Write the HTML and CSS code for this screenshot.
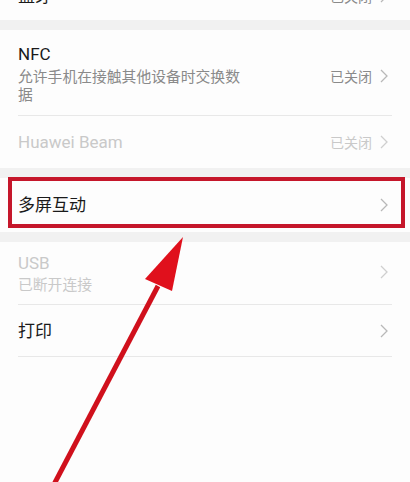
FILE: index.html
```html
<!DOCTYPE html>
<html lang="zh-CN">
<head>
    <meta charset="UTF-8">
    <meta name="viewport" content="width=device-width, initial-scale=1.0">
    <title>更多连接方式</title>
    <link rel="stylesheet" href="styles.css">
</head>
<body>
    <div class="page">
        <div class="section cut">
            <div class="row">
                <span class="title">蓝牙</span>
                <span class="right"><span class="value">已关闭</span><svg class="chev" viewBox="0 0 8 14"><polyline points="1,1 7,7 1,13"/></svg></span>
            </div>
        </div>

        <div class="section">
            <div class="row tall">
                <div class="text">
                    <div class="title">NFC</div>
                    <div class="sub">允许手机在接触其他设备时交换数据</div>
                </div>
                <span class="right"><span class="value">已关闭</span><svg class="chev" viewBox="0 0 8 14"><polyline points="1,1 7,7 1,13"/></svg></span>
            </div>
            <div class="row disabled last">
                <span class="title">Huawei Beam</span>
                <span class="right"><span class="value">已关闭</span><svg class="chev" viewBox="0 0 8 14"><polyline points="1,1 7,7 1,13"/></svg></span>
            </div>
        </div>

        <div class="section">
            <div class="row last mid">
                <span class="title">多屏互动</span>
                <span class="right"><svg class="chev" viewBox="0 0 8 14"><polyline points="1,1 7,7 1,13"/></svg></span>
            </div>
            <div class="highlight"></div>
        </div>

        <div class="section grow">
            <div class="row usb disabled">
                <div class="text">
                    <div class="title">USB</div>
                    <div class="sub">已断开连接</div>
                </div>
                <span class="right"><svg class="chev" viewBox="0 0 8 14"><polyline points="1,1 7,7 1,13"/></svg></span>
            </div>
            <div class="row">
                <span class="title">打印</span>
                <span class="right"><svg class="chev" viewBox="0 0 8 14"><polyline points="1,1 7,7 1,13"/></svg></span>
            </div>
        </div>

        <!-- annotation arrow -->
        <svg class="arrow" viewBox="0 0 410 482">
            <line x1="158" y1="286" x2="50" y2="492" stroke="#d0101c" stroke-width="5"/>
            <polygon points="183,237 145,279 172,291" fill="#e0101c"/>
        </svg>
    </div>
</body>
</html>
```

FILE: styles.css
```css
html, body {
    margin: 0;
    padding: 0;
    height: 100%;
    overflow: hidden;
}

body {
    font-family: Roboto, "Noto Sans CJK SC", sans-serif;
    background-color: #f1f1f1;
    color: #1a1a1a;
}

.page {
    position: relative;
    display: flex;
    flex-direction: column;
    gap: 10px;
    min-height: 100%;
}

.section {
    position: relative;
    background-color: #fdfdfd;
}

.section.cut {
    margin-top: -28px;
}

.section.cut .row {
    height: 48px;
    border-bottom: none;
}

.section.grow {
    flex: 1;
}

.row {
    display: flex;
    align-items: center;
    justify-content: space-between;
    height: 52px;
    margin: 0 18px;
    border-bottom: 1px solid #e8e8e8;
    box-sizing: border-box;
}

.row.last {
    border-bottom: none;
}

.row.mid {
    height: 54px;
}

.row.tall {
    height: 86px;
    align-items: flex-start;
    padding-top: 12px;
}

.row.tall .right {
    margin-top: 24px;
}

.row.usb {
    height: 63px;
    align-items: flex-start;
    padding-top: 9px;
}

.row.usb .right {
    margin-top: 14px;
}

.title {
    font-size: 17px;
    line-height: 24px;
}

.text .sub {
    font-size: 14.8px;
    line-height: 18px;
    color: #8a8a8a;
    margin-top: 2px;
    width: 226px;
}

.row.usb .sub {
    line-height: 20px;
    margin-top: 0;
}

.right {
    display: flex;
    align-items: center;
    gap: 8px;
    margin-right: 4px;
}

.value {
    font-size: 14px;
    color: #8a8a8a;
}

.chev {
    width: 8px;
    height: 14px;
    fill: none;
    stroke: #b8b8b8;
    stroke-width: 1.3;
}

.disabled .title,
.disabled .sub,
.disabled .value {
    color: #c9c9c9;
}

.disabled .chev {
    stroke: #cfcfcf;
}

.highlight {
    position: absolute;
    top: -1px;
    left: 8px;
    right: 5px;
    height: 51px;
    border: 4px solid #c5162a;
    box-sizing: border-box;
}

.arrow {
    position: absolute;
    top: 0;
    left: 0;
    width: 410px;
    height: 482px;
    pointer-events: none;
}
```
